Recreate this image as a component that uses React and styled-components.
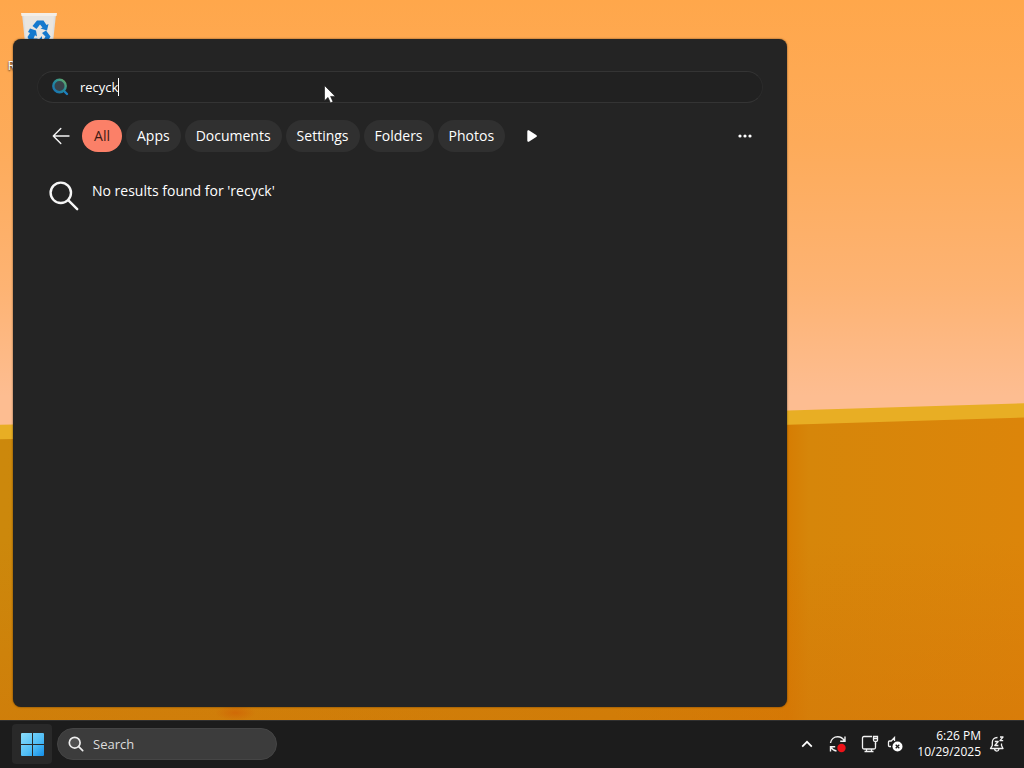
import React, { useState } from 'react';
import styled, { createGlobalStyle } from 'styled-components';

const filters = ["All", "Apps", "Documents", "Settings", "Folders", "Photos"];

export default function App() {
    const [query, setQuery] = useState("recyck");
    const [active, setActive] = useState("All");

    return (
        <Screen>
            <GlobalStyle />
            <Desktop>
                <Wallpaper />
                <Shortcut href="#recycle-bin">
                    <RecycleBinIcon />
                    <span>Recycle Bin</span>
                </Shortcut>
                <SearchWindow>
                    <SearchBox>
                        <ColorSearchIcon />
                        <input
                            type="text"
                            aria-label="Search"
                            size={5}
                            spellCheck={false}
                            value={query}
                            onChange={(e) => setQuery(e.target.value)}
                        />
                        <Caret />
                    </SearchBox>
                    <FilterRow>
                        <IconButton aria-label="Back">
                            <svg width="18" height="18" viewBox="0 0 18 18" fill="none" stroke="#f4f4f4" strokeWidth="1.4" strokeLinecap="round" strokeLinejoin="round">
                                <path d="M17 9H1.5M8.8 1.5 1.3 9l7.5 7.5" />
                            </svg>
                        </IconButton>
                        <Pills>
                            {filters.map((name) => (
                                <Pill key={name} $active={name === active} onClick={() => setActive(name)}>{name}</Pill>
                            ))}
                        </Pills>
                        <IconButton aria-label="More filters">
                            <svg width="12" height="14" viewBox="0 0 12 14" fill="#fff">
                                <path d="M1.3 2.5c0-1.1 1-1.6 1.9-1l7 4.4c.9.6.9 1.6 0 2.2l-7 4.4c-.9.6-1.9.1-1.9-1z" />
                            </svg>
                        </IconButton>
                        <Spacer />
                        <IconButton aria-label="Options">
                            <svg width="14" height="4" viewBox="0 0 14 4" fill="#fff">
                                <circle cx="2" cy="2" r="1.6" />
                                <circle cx="7" cy="2" r="1.6" />
                                <circle cx="12" cy="2" r="1.6" />
                            </svg>
                        </IconButton>
                    </FilterRow>
                    <Results>
                        <svg width="30" height="30" viewBox="0 0 30 30" fill="none" stroke="#f6f6f6" strokeWidth="2.4" strokeLinecap="round">
                            <circle cx="11.8" cy="11.8" r="10.2" />
                            <path d="m19.2 19.2 9 9" />
                        </svg>
                        <p>No results found for '{query}'</p>
                    </Results>
                </SearchWindow>
                <Pointer width="12" height="19" viewBox="0 0 12 19">
                    <path d="M.5.5v15.2l3.5-3.3 2.5 5.5 2.5-1.1-2.4-5.4h4.7z" fill="#fff" stroke="#111" strokeWidth="0.6" />
                </Pointer>
            </Desktop>
            <Taskbar>
                <StartButton aria-label="Start">
                    <StartIcon />
                </StartButton>
                <TaskbarSearch>
                    <svg width="16" height="16" viewBox="0 0 16 16" fill="#505050" stroke="#eee" strokeWidth="1.7" strokeLinecap="round">
                        <circle cx="6.7" cy="6.7" r="5.4" />
                        <path d="m10.7 10.7 4 4" />
                    </svg>
                    Search
                </TaskbarSearch>
                <Spacer />
                <Tray>
                    <TrayButton aria-label="Show hidden icons">
                        <svg width="12" height="8" viewBox="0 0 12 8" fill="none" stroke="#fff" strokeWidth="1.7">
                            <path d="m1.2 6.6 4.8-4.8 4.8 4.8" />
                        </svg>
                    </TrayButton>
                    <TrayButton aria-label="Update">
                        <UpdateIcon />
                    </TrayButton>
                    <TrayButton aria-label="Network and volume">
                        <NetworkIcon />
                        <VolumeIcon />
                    </TrayButton>
                </Tray>
                <Clock>
                    <time>6:26 PM</time>
                    <time>10/29/2025</time>
                </Clock>
                <TrayButton aria-label="Notifications">
                    <BellIcon />
                </TrayButton>
            </Taskbar>
        </Screen>
    )
}

function RecycleBinIcon() {
    return (
        <svg width="40" height="48" viewBox="0 0 40 48">
            <path d="M3 5h34l-4 38H7z" fill="#dcdedf" />
            <path d="M5 7h30l-3 34H8z" fill="#e9e5df" />
            <path d="M2 4h36l-.5 3h-35z" fill="#f4eee6" />
            <g fill="#1479ce">
                <path d="m13.5 17 4.500-5.500h6.500L27.500 16l2-1-1.500 6.500-6.500-2 2-1-2.500-3-3.500 4.500z" />
                <path d="m11 19.500 6 2 1 6-2-1.200-1.500 3.200h4v5H12L8.500 28l2.500-4-2-1z" />
                <path d="m27 21.500 4.500 6-4 7H23V37l-4.500-5 4.500-5v3h2l1.500-2.500L23 24z" />
            </g>
        </svg>
    )
}

function ColorSearchIcon() {
    return (
        <svg width="18" height="18" viewBox="0 0 18 18" fill="none">
            <defs>
                <linearGradient id="lens" x1="0" y1="1" x2="1" y2="0">
                    <stop offset="0" stopColor="#1770b5" />
                    <stop offset="0.55" stopColor="#268e9b" />
                    <stop offset="1" stopColor="#6daa61" />
                </linearGradient>
            </defs>
            <path d="m12.5 12.5 3.5 3.5" stroke="#1d7fc0" strokeWidth="2.4" strokeLinecap="round" />
            <circle cx="8.5" cy="8" r="6.2" fill="#38424a" stroke="url(#lens)" strokeWidth="2.4" />
        </svg>
    )
}

function StartIcon() {
    return (
        <svg width="24" height="24" viewBox="0 0 24 24">
            <defs>
                <linearGradient id="panes" x1="0" y1="0" x2="24" y2="24" gradientUnits="userSpaceOnUse">
                    <stop offset="0" stopColor="#8fe0fb" />
                    <stop offset="0.6" stopColor="#4fbdf5" />
                    <stop offset="1" stopColor="#138ee8" />
                </linearGradient>
            </defs>
            <path d="M2 1H12V12H1V2q0-1 1-1zM13 1h10q1 0 1 1v10h-11zM1 13h11v11h-10q-1 0-1-1zM13 13h11v10q0 1-1 1h-10z" fill="url(#panes)" />
        </svg>
    )
}

function UpdateIcon() {
    return (
        <svg width="18" height="18" viewBox="0 0 18 18" fill="none" stroke="#f2f2f2" strokeWidth="1.4">
            <path d="M1.5 8C2 4.3 5 1.8 8.7 1.8c2.900 0 5.200 1.500 6.700 4M16 1.500v4.800h-4.800M7.500 16c-2.500-.4-4.400-1.600-5.700-3.800M1.500 16.500v-4.700h4.700" />
            <circle cx="12.5" cy="13" r="4.2" fill="#ee1218" stroke="none" />
        </svg>
    )
}

function NetworkIcon() {
    return (
        <svg width="18" height="18" viewBox="0 0 18 18" fill="none" stroke="#f2f2f2" strokeWidth="1.3">
            <path d="M11 1.500H3q-1.500 0-1.500 1.500v9.500q0 1.500 1.500 1.500h10q1.500 0 1.500-1.500V8M5.500 14v2.500M10.500 14v2.500M3.500 16.500h9" />
            <path d="M12.500 1.500h4v3.500q0 1.500-1.500 1.500h-1q-1.500 0-1.500-1.500zM12.500 3.500h4M14.500 6.500v3" />
        </svg>
    )
}

function VolumeIcon() {
    return (
        <svg width="16" height="16" viewBox="0 0 16 16" fill="none" stroke="#f2f2f2" strokeWidth="1.3">
            <path d="M7.500 5V1.500L4.200 5H2.500q-1 0-1 1v3.500q0 1 1 1H4" />
            <circle cx="10.500" cy="10.500" r="5" fill="#fff" stroke="none" />
            <path d="m8.700 8.700 3.600 3.600M12.300 8.700l-3.600 3.600" stroke="#1c1c1c" />
        </svg>
    )
}

function BellIcon() {
    return (
        <svg width="16" height="18" viewBox="0 0 16 18" fill="none" stroke="#f2f2f2" strokeWidth="1.3" strokeLinejoin="round">
            <path d="M8.500 2.500C5 2.500 3.300 4.500 3.300 7.500v3L1.500 13.500h12.500l-1.500-3V8.500M5.500 14q.5 2.200 2.300 2.200T10 14" />
            <path d="M5.800 6.500h3.400L5.800 10.500h3.600M11 2h3l-3 3.700h3.200" />
        </svg>
    )
}

const GlobalStyle = createGlobalStyle`
*{
    box-sizing:border-box;
}
body{
    margin:0;
    background-color:#1c1c1c;
}
button, input{
    font:inherit;
    color:inherit;
}
button{
    border:none;
    background:none;
    padding:0;
    cursor:pointer;
}
svg{
    display:block;
    flex-shrink:0;
}
`;
const Screen = styled.div`
display:flex;
flex-direction:column;
height:100vh;
overflow:hidden;
color:#ffffff;
font-family:"Open Sans", "Noto Sans", sans-serif;
font-size:13px;
line-height:20px;
`;
const Desktop = styled.main`
position:relative;
flex:1;
min-height:0;
overflow:hidden;
background:linear-gradient(#ffa74b 0%, #fdab5a 20%, #fdb373 40%, #fdbd91 55%, #fdbd91 100%);
`;
// sand dune with a bright crest over the lower part of the sky
const Wallpaper = styled.div`
position:absolute;
inset:0;
background-color:#e8ae24;
clip-path:polygon(0 59%, 77% 57%, 100% 56%, 100% 100%, 0 100%);
&::after{
    content:"";
    position:absolute;
    inset:0;
    background:
        radial-gradient(20px 8px at 23% 99%, #d06a06, transparent),
        linear-gradient(transparent 75%, rgba(212,112,8,0.4)),
        linear-gradient(90deg, #cc880c 0%, #cf8408 60%, #d67d03 77%, #d6860a 79%, #dc850a 100%);
    clip-path:polygon(0 61%, 77% 59%, 100% 58%, 100% 100%, 0 100%);
}
`;
const Shortcut = styled.a`
position:absolute;
top:9px;
left:2px;
width:74px;
display:flex;
flex-direction:column;
align-items:center;
color:#ffffff;
font-size:12px;
line-height:18px;
text-decoration:none;
text-shadow:0 1px 2px #000000;
`;
const SearchWindow = styled.section`
position:absolute;
top:39px;
bottom:13px;
left:13px;
width:calc(100% - 26px);
max-width:774px;
display:flex;
flex-direction:column;
padding:32px 24px;
border-radius:8px;
background-color:#242424;
box-shadow:0 0 2px rgba(0,0,0,0.6);
`;
const SearchBox = styled.div`
display:flex;
align-items:center;
height:32px;
padding-left:13px;
border:1px solid #343434;
border-left-color:#2b2b2b;
border-right-color:#2b2b2b;
border-radius:16px;
background-color:#212121;
input{
    field-sizing:content;
    margin-left:11px;
    padding:0;
    border:none;
    outline:none;
    background:none;
}
`;
const Caret = styled.span`
width:1px;
height:18px;
background-color:#ffffff;
`;
const FilterRow = styled.div`
display:flex;
align-items:center;
margin-top:17px;
padding:0 9px 0 15px;
`;
const IconButton = styled.button`
display:flex;
align-items:center;
justify-content:center;
min-width:18px;
height:32px;
`;
const Pills = styled.div`
display:flex;
gap:4px;
margin:0 18px 0 12px;
`;
const Pill = styled.button`
min-width:40px;
height:32px;
padding:0 11px;
border-radius:16px;
font-size:14px;
font-weight:${({ $active }) => $active ? 400 : 500};
color:${({ $active }) => $active ? "#3b1a14" : "#ffffff"};
background-color:${({ $active }) => $active ? "#fb8068" : "#303030"};
`;
const Spacer = styled.div`
flex:1;
`;
const Results = styled.div`
display:flex;
align-items:flex-start;
gap:13px;
margin-top:29px;
padding-left:12px;
font-size:14px;
font-weight:500;
p{
    margin:0;
}
`;
const Pointer = styled.svg`
position:absolute;
top:85px;
left:324px;
pointer-events:none;
`;
const Taskbar = styled.footer`
display:flex;
align-items:center;
height:48px;
padding:0 19px 0 12px;
background-color:#1c1c1c;
box-shadow:inset 0 1px #303030;
`;
const StartButton = styled.button`
display:flex;
align-items:center;
justify-content:center;
width:40px;
height:40px;
border-radius:4px;
background-color:#292929;
`;
const TaskbarSearch = styled.button`
display:flex;
align-items:center;
gap:9px;
width:220px;
height:32px;
margin-left:5px;
padding:0 10px;
border:1px solid #454545;
border-radius:16px;
background-color:#3c3c3c;
color:#dddddd;
`;
const Tray = styled.div`
display:flex;
align-items:center;
gap:14px;
`;
const TrayButton = styled.button`
display:flex;
align-items:center;
justify-content:center;
gap:8px;
min-width:16px;
height:40px;
`;
const Clock = styled.div`
display:flex;
flex-direction:column;
align-items:flex-end;
margin:0 8px 0 14px;
font-size:12px;
line-height:16px;
`;
